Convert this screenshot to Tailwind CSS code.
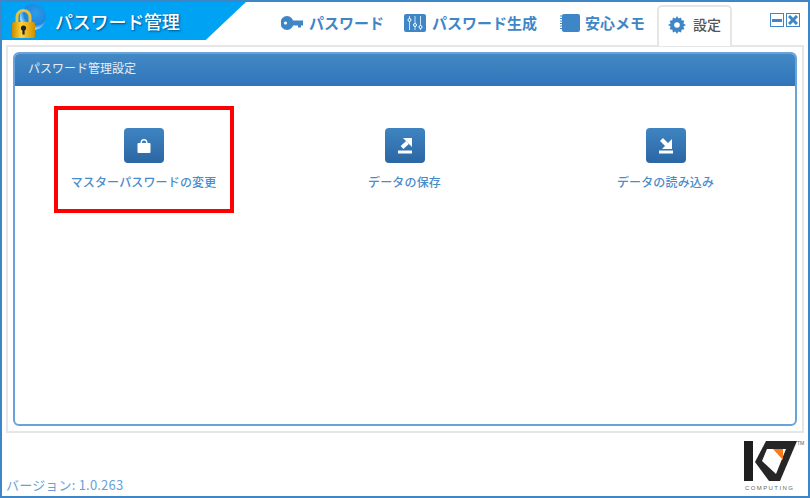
<!DOCTYPE html>
<html lang="ja">
<head>
  <meta charset="UTF-8" />
  <title>パスワード管理</title>
  <script src="https://cdn.jsdelivr.net/npm/@tailwindcss/browser@4"></script>
</head>
<body class="bg-white overflow-hidden font-['Noto_Sans_CJK_JP',sans-serif]">
  <div class="relative w-[810px] h-[498px] border-2 border-[#3f86c7] flex flex-col bg-white">

    <!-- header -->
    <div class="h-[38px] flex">
      <div class="relative w-[244px] h-[38px] bg-[#00a2f4] [clip-path:polygon(0_0,100%_0,83.5%_100%,0_100%)] flex items-center">
        <svg class="ml-[9px] w-[36px] h-[36px]" viewBox="0 0 36 36">
          <defs>
            <radialGradient id="ball" cx="60%" cy="35%" r="65%"><stop offset="0" stop-color="#2f9be8"/><stop offset="0.7" stop-color="#1a86e0"/><stop offset="1" stop-color="#c8ecff"/></radialGradient>
            <linearGradient id="gold" x1="0" x2="1" y1="0" y2="0"><stop offset="0" stop-color="#c98a00"/><stop offset="0.4" stop-color="#ffd23a"/><stop offset="1" stop-color="#d09000"/></linearGradient>
          </defs>
          <circle cx="22" cy="14" r="13" fill="url(#ball)"/>
          <path d="M6 20v-6a6.500 6.500 0 0 1 13 0v6" fill="none" stroke="#e8c040" stroke-width="3"/>
          <rect x="1" y="19" width="23" height="16" rx="2" fill="url(#gold)"/>
          <circle cx="12.500" cy="25" r="2.600" fill="#222"/>
          <rect x="11.400" y="25.500" width="2.200" height="6" fill="#222"/>
        </svg>
        <span class="ml-[8px] text-[18px] font-medium text-white tracking-[-0.2px] [text-shadow:1px_1px_2px_rgba(0,40,90,.7)]">パスワード管理</span>
      </div>

      <!-- tabs -->
      <div class="flex items-center h-[43px] pl-[35px] pb-[1px] text-[15px] font-bold text-[#3f86c7] relative">
        <div class="flex items-center w-[123px]">
          <svg class="w-[22px] h-[16px]" viewBox="0 0 22 16" fill="#3f86c7"><path d="M6 1a6.500 7 0 1 1 0 14a6.500 7 0 0 1 0-14zM11 5.500h11v5h-2v2h-3v-2h-6z"/><circle cx="4.500" cy="8" r="1.600" fill="#fff"/></svg>
          <span class="ml-[6px]">パスワード</span>
        </div>
        <div class="flex items-center w-[156px]">
          <svg class="w-[22px] h-[18px]" viewBox="0 0 22 18"><rect width="22" height="18" rx="2" fill="#3f86c7"/><path d="M5.500 2v14M11 2v14M16.500 2v14" stroke="#cfe2f3" stroke-width="1"/><circle cx="5.500" cy="6" r="1.500" fill="#3f86c7" stroke="#fff"/><circle cx="11" cy="11" r="1.500" fill="#3f86c7" stroke="#fff"/><circle cx="16.500" cy="13" r="1.500" fill="#3f86c7" stroke="#fff"/></svg>
          <span class="ml-[6px]">パスワード生成</span>
        </div>
        <div class="flex items-center w-[97px]">
          <svg class="w-[20px] h-[18px]" viewBox="0 0 20 18"><rect x="2" width="18" height="18" rx="2" fill="#3f86c7"/><path d="M0 2h3M0 4.500h3M0 7h3M0 9.500h3M0 12h3M0 14.500h3" stroke="#3f86c7" stroke-width="1"/></svg>
          <span class="ml-[5px]">安心メモ</span>
        </div>
        <div class="flex items-center justify-center gap-[7px] w-[75px] h-[41px] mt-[4px] pb-[3px] border-2 border-b-0 border-[#e6e6e6] rounded-t-[5px] bg-white z-10 text-[#555] text-[14px] font-medium">
          <svg class="w-[18px] h-[18px]" viewBox="0 0 18 18" fill="#3f86c7"><path d="M9 0l1.500 2.500 2.600-1 .5 2.800 2.800.5-1 2.600L18 9l-2.600 1.600 1 2.600-2.800.5-.5 2.800-2.600-1L9 18l-1.500-2.500-2.600 1-.5-2.800-2.800-.5 1-2.600L0 9l2.600-1.600-1-2.600 2.800-.5.5-2.800 2.600 1z"/><circle cx="9" cy="9" r="2.800" fill="#fff"/></svg>
          <span>設定</span>
        </div>
      </div>

      <!-- window buttons -->
      <div class="ml-[38px] mt-[11px] flex gap-[2px]">
        <div class="w-[14px] h-[14px] border border-[#3f86c7] flex items-center justify-center"><div class="w-[10px] h-[3px] bg-[#3f86c7]"></div></div>
        <div class="w-[14px] h-[14px] border border-[#3f86c7] flex items-center justify-center">
          <svg class="w-[10px] h-[10px]" viewBox="0 0 10 10"><path d="M1 1l8 8M9 1l-8 8" stroke="#3f86c7" stroke-width="3"/></svg>
        </div>
      </div>
    </div>

    <!-- content frame -->
    <div class="ml-[4px] mr-[4px] mt-[5px] h-[388px] border-2 border-[#e6e6e6] p-[5px]">
      <div class="h-full border-2 border-[#6aa3da] rounded-[6px] flex flex-col overflow-hidden">
        <div class="h-[32px] flex items-center pl-[13px] pb-[4px] text-[12px] text-[#e4eef8] bg-gradient-to-b from-[#4389c6] to-[#2f75b8]">パスワード管理設定</div>
        <div class="grid grid-cols-[261px_261px_261px] ml-[-2px] pt-[42px] text-[12px] tracking-[0.15px] font-medium text-[#4a8ccb]">
          <div class="flex flex-col items-center">
            <div class="w-[40px] h-[35px] rounded-[4px] bg-gradient-to-b from-[#3f84c2] to-[#2a67a3] flex items-center justify-center">
              <svg class="w-[16px] h-[16px]" viewBox="0 0 16 16" fill="#fff"><path d="M4.500 6V4.500a3.500 3.500 0 0 1 7 0V6H10V4.500a2 2 0 0 0-4 0V6z"/><rect x="1.500" y="5" width="13" height="10" rx="1"/></svg>
            </div>
            <span class="mt-[10px] leading-[18px]">マスターパスワードの変更</span>
          </div>
          <div class="flex flex-col items-center">
            <div class="w-[40px] h-[35px] rounded-[4px] bg-gradient-to-b from-[#3f84c2] to-[#2a67a3] flex items-center justify-center">
              <svg class="w-[16px] h-[16px]" viewBox="0 0 16 16" fill="#fff"><path d="M6 0h9v9z"/><path d="M10.500 4.500L5 9.500" stroke="#fff" stroke-width="4"/><rect x="1" y="12.500" width="14" height="3"/></svg>
            </div>
            <span class="mt-[10px] leading-[18px]">データの保存</span>
          </div>
          <div class="flex flex-col items-center">
            <div class="w-[40px] h-[35px] rounded-[4px] bg-gradient-to-b from-[#3f84c2] to-[#2a67a3] flex items-center justify-center">
              <svg class="w-[16px] h-[16px]" viewBox="0 0 16 16" fill="#fff"><path d="M14 11H4l10-10z"/><path d="M3.500 1.500L9 7" stroke="#fff" stroke-width="4"/><rect x="1" y="12.500" width="14" height="3"/></svg>
            </div>
            <span class="mt-[10px] leading-[18px]">データの読み込み</span>
          </div>
        </div>
      </div>
    </div>

    <!-- footer -->
    <div class="flex-1 flex justify-between items-end pl-[4px] pr-[11px] pb-[2px]">
      <span class="text-[13px] leading-[18px] tracking-[0.2px] text-[#6a9fd8]">バージョン: 1.0.263</span>
      <div class="relative w-[53px] h-[52px] mb-[1px]">
        <svg class="w-[53px] h-[41px] block" viewBox="0 0 53 41">
          <path d="M0 0h9v40H0z" fill="#1f1f1f"/>
          <path d="M11 21L22 0h31L36 40H25z" fill="#262626"/>
          <path d="M23 8h19L32 33 18 20z" fill="#fff"/>
          <path d="M29 8h10v11z" fill="#f47b20"/>
        </svg>
        <span class="absolute left-[1px] top-[43px] text-[6px] leading-[8px] tracking-[1.4px] text-[#666] font-['Liberation_Sans',sans-serif]">COMPUTING</span>
        <span class="absolute left-[53px] top-[-1px] text-[5px] leading-[7px] text-[#555] font-['Liberation_Sans',sans-serif]">TM</span>
      </div>
    </div>

    <!-- red annotation -->
    <div class="absolute left-[52px] top-[104px] w-[180px] h-[107px] border-4 border-[#ff0000]"></div>
  </div>
</body>
</html>
